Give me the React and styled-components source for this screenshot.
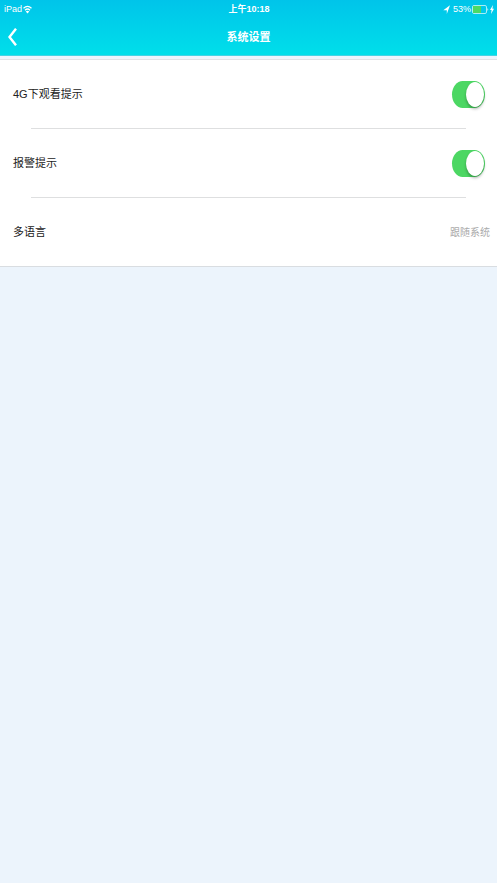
import { useState } from "react";
import styled, { createGlobalStyle } from "styled-components";

const GlobalStyle = createGlobalStyle`
  * {
    box-sizing: border-box;
  }

  body {
    margin: 0;
    background: #ecf4fc;
    font-family: "Liberation Sans", "Noto Sans CJK SC", sans-serif;
    color: #222;
  }
`;

const Header = styled.header`
  height: 56px;
  color: #fff;
  background: linear-gradient(#00c4ea, #00dfea);
  border-bottom: 1px solid #45d3e4;
`;

const StatusBar = styled.div`
  display: grid;
  grid-template-columns: 1fr auto 1fr;
  align-items: center;
  height: 18px;
  padding: 0 3px 0 4px;
  font-size: 9px;
  line-height: 18px;
`;

const StatusGroup = styled.div`
  display: flex;
  align-items: center;
  justify-content: ${({ $end }) => ($end ? "flex-end" : "flex-start")};
  gap: 1px;
`;

const Percent = styled.span`
  margin-left: 2px;
`;

const Time = styled.time`
  font-weight: 700;
`;

const NavBar = styled.div`
  display: grid;
  grid-template-columns: 1fr auto 1fr;
  align-items: center;
  height: 37px;
`;

const BackButton = styled.button`
  display: flex;
  align-items: center;
  justify-self: start;
  height: 36px;
  padding: 0 8px;
  border: 0;
  background: none;
  color: inherit;
  cursor: pointer;
`;

const Title = styled.h1`
  margin: 0;
  font-size: 11px;
  font-weight: 700;
  line-height: 36px;
`;

const List = styled.ul`
  margin: 3px 0 0;
  padding: 0;
  list-style: none;
  background: #fff;
  border-top: 1px solid #dfe2e6;
  border-bottom: 1px solid #d9dde1;
`;

const Item = styled.li`
  & + &::before {
    content: "";
    display: block;
    height: 1px;
    margin: 0 31px;
    background: #dedfe0;
  }
`;

const Row = styled.label`
  display: flex;
  align-items: center;
  justify-content: space-between;
  height: 68px;
  padding: 0 12px 0 13px;
  font-size: 11px;
  cursor: pointer;
`;

const ValueRow = styled.button`
  display: flex;
  align-items: center;
  justify-content: space-between;
  width: 100%;
  height: 68px;
  padding: 0 7px 0 13px;
  border: 0;
  background: none;
  color: inherit;
  font-family: inherit;
  font-size: 11px;
  cursor: pointer;
`;

const Label = styled.span`
  padding-bottom: 2px;
`;

const Value = styled(Label)`
  color: #aaa;
  font-size: 10px;
`;

const Switch = styled.input.attrs({ type: "checkbox", role: "switch" })`
  appearance: none;
  display: flex;
  align-items: center;
  justify-content: flex-start;
  width: 33px;
  height: 27px;
  margin: 0;
  padding: 1px;
  border-radius: 11px / 14px;
  background: #ddd;
  cursor: pointer;

  &::before {
    content: "";
    width: 18px;
    height: 25px;
    border-radius: 50%;
    background: #fff;
    box-shadow: 0 2px 3px rgba(0, 0, 0, 0.3);
  }

  &:checked {
    justify-content: flex-end;
    background: #4cd763;
  }
`;

const WifiIcon = () => (
  <svg width="9" height="9" viewBox="0 0 18 18" fill="none" stroke="#fff" strokeWidth="2.4" aria-hidden="true">
    <path d="M1 6.5Q9-1 17 6.5M4 10.5Q9 5.5 14 10.5" />
    <path d="M9 17 5.5 12.8Q9 10 12.5 12.8Z" fill="#fff" stroke="none" />
  </svg>
);

const LocationIcon = () => (
  <svg width="7" height="9" viewBox="0 0 7 9" fill="#fff" aria-hidden="true">
    <path d="M7 .3 3.8 9V5.2H.3Z" />
  </svg>
);

const BatteryIcon = () => (
  <svg width="17" height="9" viewBox="0 0 17 9" fill="none" aria-hidden="true">
    <rect x=".5" y=".5" width="14" height="8" rx="1.5" stroke="#a9eef6" />
    <rect x="1" y="1" width="8" height="7" fill="#4cd964" />
    <path d="M15.5 3Q17 4.5 15.5 6Z" fill="#fff" />
  </svg>
);

const BoltIcon = () => (
  <svg width="4" height="9" viewBox="0 0 4 9" fill="#fff" aria-hidden="true">
    <path d="M3 0 0 5H1.6L1 9 4 3.7H2.4Z" />
  </svg>
);

const BackIcon = () => (
  <svg width="9" height="18" viewBox="0 0 9 18" fill="none" stroke="#fff" strokeWidth="2.4" aria-hidden="true">
    <path d="M8 .7 1.5 9 8 17.3" />
  </svg>
);

const SwitchItem = ({ label }) => {
  const [checked, setChecked] = useState(true);

  return (
    <Item>
      <Row>
        <Label>{label}</Label>
        <Switch checked={checked} onChange={() => setChecked(!checked)} />
      </Row>
    </Item>
  );
};

const App = () => (
  <>
    <GlobalStyle />
    <Header>
      <StatusBar>
        <StatusGroup>
          iPad
          <WifiIcon />
        </StatusGroup>
        <Time>上午10:18</Time>
        <StatusGroup $end>
          <LocationIcon />
          <Percent>53%</Percent>
          <BatteryIcon />
          <BoltIcon />
        </StatusGroup>
      </StatusBar>
      <NavBar>
        <BackButton aria-label="返回">
          <BackIcon />
        </BackButton>
        <Title>系统设置</Title>
      </NavBar>
    </Header>
    <main>
      <List>
        <SwitchItem label="4G下观看提示" />
        <SwitchItem label="报警提示" />
        <Item>
          <ValueRow>
            <Label>多语言</Label>
            <Value>跟随系统</Value>
          </ValueRow>
        </Item>
      </List>
    </main>
  </>
);

export default App;
